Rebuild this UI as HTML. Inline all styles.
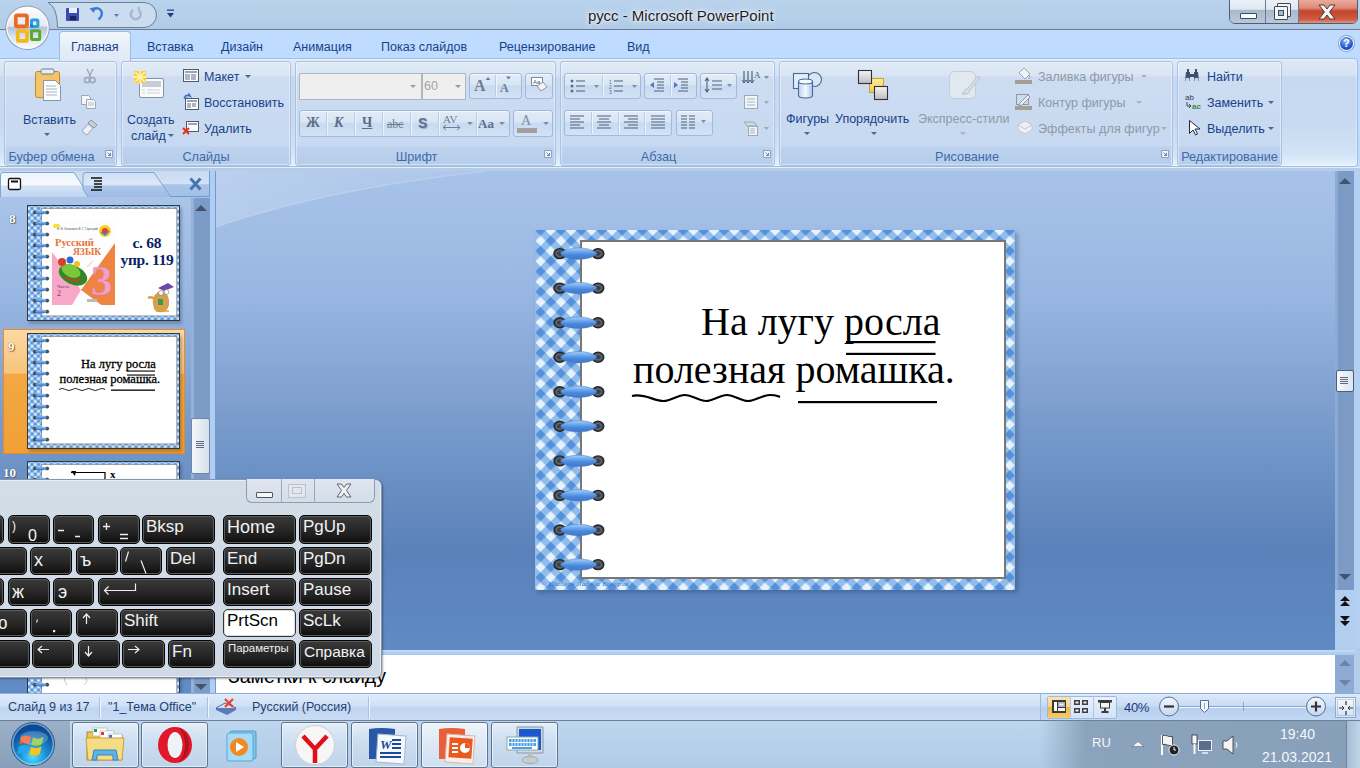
<!DOCTYPE html>
<html><head><meta charset="utf-8"><style>
html,body{margin:0;padding:0}
body{width:1360px;height:768px;overflow:hidden;position:relative;font-family:"Liberation Sans",sans-serif;font-size:12px;color:#15428b;background:#b4cde8}
.a{position:absolute}
.t{position:absolute;white-space:nowrap;line-height:1}
.grp{position:absolute;top:61px;height:103px;border:1px solid #a9c3e0;border-radius:3px;background:linear-gradient(#e1ebf7 0,#d9e5f4 14px,#cddcf1 15px,#c7d9f0 84px,#bcd2ee 85px,#b6cdeb 100%);box-shadow:inset 0 0 0 1px rgba(255,255,255,.4)}
.gl{position:absolute;left:0;right:0;top:88px;text-align:center;font-size:12.7px;color:#3e6aaa;line-height:14px}
.gll{right:18px}
</style></head><body>

<!-- ===== TITLE BAR ===== -->
<div class=a style="left:0;top:0;width:1360px;height:29px;background:linear-gradient(#bad3ec,#b1cbe7)"></div>
<div class=a style="left:0;top:29px;width:1360px;height:1px;background:#6d7d8f"></div>
<div class=t style="left:588px;top:8px;font-size:15px;color:#1e1e1e;text-shadow:0 0 6px #fff,0 0 3px #fff">русс - Microsoft PowerPoint</div>
<!-- QAT -->
<svg class=a style="left:44px;top:0" width="135" height="30">
 <path d="M4 2.5 H100 A12.5 12.5 0 0 1 100 27.5 H13.5 Q13.5 7 4 2.5Z" fill="#c9dcf0" stroke="#6f7f92" stroke-width="1"/>
 <rect x="22" y="8" width="13" height="13" fill="#3f49b6" rx="1"/>
 <rect x="25" y="8" width="8" height="5" fill="#e8eefc"/>
 <rect x="26" y="16" width="6" height="4" fill="#1d2160"/>
 <path d="M49 10 q6 -4 8.5 1.5 q1.5 4 -3 8" fill="none" stroke="#3a78d8" stroke-width="2.4"/>
 <path d="M45.5 8.5 l6 -1.5 l-1.5 6z" fill="#3a78d8"/>
 <path d="M70 14 h5 l-2.5 3z" fill="#5b7ab5"/>
 <path d="M94.5 10 A5 5 0 1 1 89 10" fill="none" stroke="#a9b7c8" stroke-width="2.4"/><path d="M93 7 l3.5 0.5 l-1.5 4z" fill="#a9b7c8"/>
 <path d="M123 13 h7 l-3.5 4.5z M123 9.5 h7 v1.3 h-7z" fill="#1f3f80"/>
</svg>
<!-- window buttons -->
<div class=a style="left:1229px;top:-3px;width:127px;height:25px;border:1px solid #4f5f73;border-radius:0 0 6px 6px;overflow:hidden">
 <div class=a style="left:0;top:0;width:35px;height:25px;background:linear-gradient(#eef3f9 0,#dfe7f1 45%,#a9bacd 50%,#b9c8d9 100%);border-right:1px solid #6a7a8d"></div>
 <div class=a style="left:36px;top:0;width:32px;height:25px;background:linear-gradient(#eef3f9 0,#dfe7f1 45%,#a9bacd 50%,#b9c8d9 100%);border-right:1px solid #6a7a8d"></div>
 <div class=a style="left:69px;top:0;width:58px;height:25px;background:linear-gradient(#eeb3a5 0,#dc8a76 40%,#c4452c 52%,#cf5a42 85%,#e09684 100%)"></div>
 <div class=a style="left:10px;top:15px;width:15px;height:4px;background:#fdfdfd;border:1px solid #3d4a5a;border-radius:1px"></div>
 <div class=a style="left:47px;top:5px;width:12px;height:12px;background:#f2f2f2;border:1px solid #3d4a5a;border-radius:1px"></div>
 <div class=a style="left:44px;top:8px;width:12px;height:12px;background:#f5f5f5;border:1px solid #3d4a5a;border-radius:1px"></div>
 <div class=a style="left:48px;top:12px;width:4px;height:4px;background:#a9bacd;border:1px solid #3d4a5a"></div>
 <svg class=a style="left:87px;top:6px" width="20" height="16"><path d="M2 1 h5 l3 4 l3 -4 h5 l-5.5 7 l5.5 7 h-5 l-3 -4 l-3 4 h-5 l5.5 -7z" fill="#f4f4f4" stroke="#4b3c3c" stroke-width="1"/></svg>
</div>
<!-- ===== TAB ROW ===== -->
<div class=a style="left:0;top:30px;width:1360px;height:28px;background:#bfdbff"></div>


<div class=t style="left:147px;top:41px;font-size:12.5px">Вставка</div>
<div class=t style="left:221px;top:41px;font-size:12.5px">Дизайн</div>
<div class=t style="left:293px;top:41px;font-size:12.5px">Анимация</div>
<div class=t style="left:381px;top:41px;font-size:12.5px">Показ слайдов</div>
<div class=t style="left:499px;top:41px;font-size:12.5px">Рецензирование</div>
<div class=t style="left:627px;top:41px;font-size:12.5px">Вид</div>

<!-- help -->
<div class=a style="left:1340px;top:37px;width:13px;height:13px;border-radius:50%;background:radial-gradient(circle at 45% 30%,#8fb8ff,#2058d0 60%,#1840a8);box-shadow:0 0 0 1px #fff,0 0 0 2px #8aa0c0"></div>
<div class=t style="left:1343px;top:38px;font-size:11px;font-weight:bold;color:#fff">?</div>

<!-- Office button -->
<svg class=a style="left:0;top:0" width="56" height="56">
 <defs>
  <linearGradient id="obg" x1="0" y1="0" x2="0" y2="1"><stop offset="0" stop-color="#fdfdfe"/><stop offset=".45" stop-color="#e3e9f1"/><stop offset=".5" stop-color="#b4c4d8"/><stop offset=".75" stop-color="#dfe6ef"/><stop offset="1" stop-color="#f7f9fb"/></linearGradient>
  <radialGradient id="obr" cx=".5" cy=".5" r=".5"><stop offset=".8" stop-color="#fff" stop-opacity="0"/><stop offset="1" stop-color="#fff" stop-opacity=".9"/></radialGradient>
 </defs>
 <circle cx="27.5" cy="27.7" r="22.2" fill="#8b9cb2"/>
 <circle cx="27.5" cy="27.7" r="21.3" fill="#fafbfd"/>
 <circle cx="27.5" cy="27.7" r="20" fill="url(#obg)"/>
 <rect x="15.8" y="15.3" width="11.2" height="11" rx="1.5" fill="none" stroke="#ea6a22" stroke-width="3.7"/>
 <rect x="31.5" y="20.1" width="6.4" height="6.5" rx="1" fill="none" stroke="#2b9ee0" stroke-width="3"/>
 <rect x="17.8" y="31" width="9.2" height="9.9" rx="1" fill="none" stroke="#f4b81a" stroke-width="3.7"/>
 <rect x="31.5" y="30.7" width="8.2" height="8.7" rx="1" fill="none" stroke="#58aa30" stroke-width="3"/>
 <rect x="25.5" y="25" width="3" height="3" fill="#f07830"/><rect x="30" y="24.5" width="3" height="3" fill="#1e7ad0"/>
 <rect x="25.5" y="29.2" width="3" height="3" fill="#f6c040"/><rect x="30.3" y="29.5" width="3" height="3" fill="#48b040"/>
</svg>
<!-- ===== RIBBON ===== -->
<div class=a style="left:0;top:58px;width:1360px;height:110px;background:#bfdbff"></div><div class=a style="left:-3px;top:58px;width:1361px;height:109px;box-sizing:border-box;border:1px solid #9fbde3;border-radius:4px;background:linear-gradient(#dfe9f6 0,#d5e2f3 17px,#c6d9f0 18px,#c7daf1 60%,#d3e3f6 88%,#e4f1fc 100%);box-shadow:inset 0 0 0 1px rgba(255,255,255,.35)"></div>
<div class=a style="left:59px;top:31px;width:70px;height:29px;border:1px solid #98bde6;border-bottom:none;border-radius:4px 4px 0 0;background:linear-gradient(#f3f7fc,#e4ecf7 60%,#dfe9f6)"></div>
<div class=t style="left:71px;top:41px;font-size:12.5px">Главная</div>
<div class="grp" style="left:4px;width:111px"><div class="gl gll">Буфер обмена</div></div>
<svg class=a style="left:105px;top:150px" width="9" height="9"><path d="M0.5 0.5h7v7h-7z" fill="#eef4fa" stroke="#8aa2c0"/><path d="M2.5 2.5l3 3M5.5 3v2.5h-2.5" fill="none" stroke="#6a86ac"/></svg>
<div class="grp" style="left:121px;width:168px"><div class="gl">Слайды</div></div>
<div class="grp" style="left:295px;width:259px"><div class="gl gll">Шрифт</div></div>
<svg class=a style="left:544px;top:150px" width="9" height="9"><path d="M0.5 0.5h7v7h-7z" fill="#eef4fa" stroke="#8aa2c0"/><path d="M2.5 2.5l3 3M5.5 3v2.5h-2.5" fill="none" stroke="#6a86ac"/></svg>
<div class="grp" style="left:560px;width:213px"><div class="gl gll">Абзац</div></div>
<svg class=a style="left:763px;top:150px" width="9" height="9"><path d="M0.5 0.5h7v7h-7z" fill="#eef4fa" stroke="#8aa2c0"/><path d="M2.5 2.5l3 3M5.5 3v2.5h-2.5" fill="none" stroke="#6a86ac"/></svg>
<div class="grp" style="left:779px;width:392px"><div class="gl gll">Рисование</div></div>
<svg class=a style="left:1161px;top:150px" width="9" height="9"><path d="M0.5 0.5h7v7h-7z" fill="#eef4fa" stroke="#8aa2c0"/><path d="M2.5 2.5l3 3M5.5 3v2.5h-2.5" fill="none" stroke="#6a86ac"/></svg>
<div class="grp" style="left:1177px;width:103px"><div class="gl">Редактирование</div></div>


<!-- ribbon contents -->
<style>
.rt{position:absolute;white-space:nowrap;line-height:1;font-size:12.5px;color:#15428b;margin-top:1px}
.gr{color:#8d99a8}
.dd{position:absolute;width:0;height:0;border-left:3px solid transparent;border-right:3px solid transparent;border-top:3px solid #4a6796}
.seg{position:absolute;border:1px solid #9fbadc;border-radius:3px;background:linear-gradient(#e3ecf7 0,#d8e5f4 45%,#c8daf1 50%,#d3e2f5 100%);box-shadow:inset 0 1px 0 #f3f7fc}
.sep{position:absolute;top:1px;bottom:1px;width:1px;background:#b8cde6;box-shadow:1px 0 0 #eef4fb}
</style>
<!-- Clipboard -->
<svg class=a style="left:33px;top:67px" width="32" height="34">
 <rect x="2.5" y="4.5" width="24" height="26" rx="2" fill="#f3c46b" stroke="#c08a2e"/>
 <rect x="8" y="2" width="13" height="5" rx="1.5" fill="#e9edf2" stroke="#6f7a86"/>
 <path d="M10.5 13.5h12l5 5v15h-17z" fill="#fbfcfd" stroke="#8a96a3"/>
 <path d="M13 19h10M13 22h11M13 25h11M13 28h11" stroke="#a9b4c0" stroke-width="1"/>
</svg>
<div class="rt" style="left:23px;top:113px">Вставить</div>
<div class="dd" style="left:44px;top:133px"></div>
<svg class=a style="left:82px;top:68px" width="16" height="16"><path d="M5 1l4 8M11 1l-4 8" stroke="#a0abb8" stroke-width="1.5"/><circle cx="5" cy="12" r="2.6" fill="none" stroke="#98a6b6" stroke-width="1.5"/><circle cx="10.5" cy="12" r="2.6" fill="none" stroke="#98a6b6" stroke-width="1.5"/></svg>
<svg class=a style="left:80px;top:94px" width="17" height="15"><path d="M1.5 1.5h7l2 2v7h-9z" fill="#f4f6f9" stroke="#9ba7b4"/><path d="M6.5 5.5h7l2 2v7h-9z" fill="#f4f6f9" stroke="#9ba7b4"/><path d="M8 9h6M8 11h6" stroke="#b5bfca"/></svg>
<svg class=a style="left:81px;top:119px" width="17" height="17"><path d="M10 1l6 5-3 3-6-5z" fill="#c7d0da" stroke="#8995a3"/><path d="M7 5l5 4-6 7-5-4z" fill="#eef1f5" stroke="#9aa6b4"/></svg>
<!-- Slides -->
<svg class=a style="left:133px;top:70px" width="34" height="30">
 <rect x="6.5" y="8.5" width="24" height="19" rx="1.5" fill="#fafbfc" stroke="#8792a0"/>
 <rect x="9" y="11" width="19" height="6" fill="#c5ccd6"/>
 <path d="M9 20h3M14 20h13M9 23h3M14 23h13" stroke="#c9d0d9"/>
 <rect x="1" y="1" width="12" height="12" fill="#f5cf3a" opacity=".95"/>
 <path d="M7 0v14M0 7h14M2 2l10 10M12 2l-10 10" stroke="#fff7b0" stroke-width="1.4"/>
</svg>
<div class="rt" style="left:127px;top:113px">Создать</div>
<div class="rt" style="left:131px;top:129px">слайд</div>
<div class="dd" style="left:168px;top:134px"></div>
<svg class=a style="left:183px;top:69px" width="17" height="15"><rect x="0.5" y="0.5" width="15" height="12" fill="#fafbfc" stroke="#4e5b6b"/><rect x="2" y="2" width="12" height="2" fill="#9aa6b6"/><rect x="2" y="5" width="5" height="6" fill="#aeb8c4"/><path d="M8 6h5M8 8h5M8 10h5" stroke="#5a6f90"/></svg>
<div class="rt" style="left:204px;top:70px">Макет</div>
<div class="dd" style="left:245px;top:75px"></div>
<svg class=a style="left:183px;top:93px" width="17" height="18"><path d="M1 5 q2 -4 6 -2 l-1.5 -2.5M1 5l4 .5" fill="none" stroke="#3a6fc8" stroke-width="1.6"/><rect x="2.5" y="5.5" width="13" height="11" fill="#fafbfc" stroke="#4e5b6b"/><rect x="4" y="7" width="10" height="2" fill="#9aa6b6"/><rect x="4" y="10" width="4" height="5" fill="#aeb8c4"/><path d="M9 11h4M9 13h4" stroke="#5a6f90"/></svg>
<div class="rt" style="left:204px;top:96px">Восстановить</div>
<svg class=a style="left:182px;top:120px" width="18" height="16"><rect x="4.5" y="1.5" width="12" height="10" fill="#fafbfc" stroke="#4e5b6b"/><rect x="6" y="3" width="9" height="2" fill="#9aa6b6"/><path d="M1 8l6 6M7 8l-6 6" stroke="#e2321c" stroke-width="2"/></svg>
<div class="rt" style="left:204px;top:122px">Удалить</div>
<!-- Font -->
<div class=a style="left:299px;top:73px;width:121px;height:25px;background:#efefef;border:1px solid #aeb6bf"></div>
<div class="dd" style="left:410px;top:85px;border-top-color:#9a9a9a"></div>
<div class=a style="left:422px;top:73px;width:42px;height:25px;background:#efefef;border:1px solid #aeb6bf"></div>
<div class="rt" style="left:424px;top:79px;color:#a5a5a5">60</div>
<div class="dd" style="left:455px;top:85px;border-top-color:#9a9a9a"></div>
<div class="seg" style="left:469px;top:73px;width:51px;height:24px"><div class="sep" style="left:25px"></div></div>
<div class="t" style="left:474px;top:77px;font:bold 16px 'Liberation Serif';color:#6b7f9a">A</div>
<div class="t" style="left:500px;top:81px;font:bold 12px 'Liberation Serif';color:#6b7f9a">A</div>
<svg class=a style="left:469px;top:73px" width="52" height="24"><path d="M16.5 7l2.5 -3 2.5 3zM37 3.5h5l-2.5 3z" fill="#6b7f9a"/></svg>
<div class="seg" style="left:525px;top:73px;width:26px;height:24px"></div>
<svg class=a style="left:529px;top:76px" width="20" height="18"><rect x="2.5" y="1.5" width="11" height="8" fill="#fff" stroke="#7a8aa0"/><text x="4" y="8" font-size="6" font-family="Liberation Sans" fill="#4a5a70">Aa</text><path d="M8 10l6 -4 4 5 -6 4z" fill="#f2f4f7" stroke="#8a96a8"/></svg>
<div class="seg" style="left:299px;top:110px;width:209px;height:25px">
 <div class="sep" style="left:26px"></div><div class="sep" style="left:54px"></div><div class="sep" style="left:82px"></div><div class="sep" style="left:110px"></div><div class="sep" style="left:138px"></div><div class="sep" style="left:176px"></div>
</div>
<div class="t" style="left:306px;top:115px;font:bold 14px 'Liberation Serif';color:#5d6f88">Ж</div>
<div class="t" style="left:334px;top:115px;font:bold italic 14px 'Liberation Serif';color:#5d6f88">К</div>
<div class="t" style="left:362px;top:115px;font:bold 14px 'Liberation Serif';color:#5d6f88;text-decoration:underline">Ч</div>
<div class="t" style="left:387px;top:117px;font:12px 'Liberation Serif';color:#6b7d96;text-decoration:line-through">abc</div>
<div class="t" style="left:418px;top:115px;font:bold 14px 'Liberation Sans';color:#5d6f88;text-shadow:1px 1px 1px #9aaac0">S</div>
<div class="t" style="left:443px;top:113px;font:11px 'Liberation Serif';color:#6b7d96">AV</div>
<svg class=a style="left:442px;top:124px" width="20" height="7"><path d="M1 3.5h17M4 1l-3 2.5 3 2.5M15 1l3 2.5-3 2.5" fill="none" stroke="#6b7d96"/></svg>
<div class="dd" style="left:467px;top:122px;border-top-color:#7d8ea6"></div>
<div class="t" style="left:478px;top:116px;font:bold 13px 'Liberation Serif';color:#5d6f88">Aa</div>
<div class="dd" style="left:499px;top:122px;border-top-color:#7d8ea6"></div>
<div class="seg" style="left:513px;top:110px;width:38px;height:25px"></div>
<div class="t" style="left:521px;top:113px;font:14px 'Liberation Serif';color:#7a8ca6">A</div>
<div class=a style="left:517px;top:128px;width:20px;height:5px;background:#a0a0a0"></div>
<div class="dd" style="left:543px;top:122px;border-top-color:#7d8ea6"></div>
<!-- Paragraph -->
<div class="seg" style="left:564px;top:73px;width:75px;height:24px"><div class="sep" style="left:37px"></div></div>
<svg class=a style="left:570px;top:78px" width="70" height="16">
 <g fill="#5d6f88"><circle cx="2" cy="3" r="1.5"/><circle cx="2" cy="8" r="1.5"/><circle cx="2" cy="13" r="1.5"/></g>
 <path d="M6 3h9M6 8h9M6 13h9" stroke="#4e617d" stroke-width="1.2"/>
 <path d="M24 7h5l-2.5 3z" fill="#7d8ea6"/>
 <text x="39" y="6" font-size="5" fill="#5d6f88" font-family="Liberation Sans">1</text><text x="39" y="11" font-size="5" fill="#5d6f88" font-family="Liberation Sans">2</text><text x="39" y="16" font-size="5" fill="#5d6f88" font-family="Liberation Sans">3</text>
 <path d="M44 3h9M44 8h9M44 13h9" stroke="#4e617d" stroke-width="1.2"/>
 <path d="M62 7h5l-2.5 3z" fill="#7d8ea6"/>
</svg>
<div class="seg" style="left:644px;top:73px;width:51px;height:24px"><div class="sep" style="left:25px"></div></div>
<svg class=a style="left:648px;top:77px" width="46" height="16">
 <path d="M6 2h10M9 5h7M9 8h7M9 11h7M6 14h10" stroke="#4e617d" stroke-width="1.2"/><path d="M6 5l-4 3 4 3z" fill="#4a78c8"/>
 <path d="M30 2h10M33 5h7M33 8h7M33 11h7M30 14h10" stroke="#4e617d" stroke-width="1.2"/><path d="M26 5l4 3-4 3z" fill="#4a78c8"/>
</svg>
<div class="seg" style="left:700px;top:73px;width:35px;height:24px"></div>
<svg class=a style="left:704px;top:76px" width="32" height="18">
 <path d="M3 2v14M1 5l2-3 2 3M1 13l2 3 2-3" fill="none" stroke="#4e617d" stroke-width="1.1"/>
 <path d="M8 5h10M8 9h10M8 13h10" stroke="#4e617d" stroke-width="1.2"/>
 <path d="M23 8h5l-2.5 3z" fill="#7d8ea6"/>
</svg>
<svg class=a style="left:742px;top:67px" width="32" height="20"><path d="M2 4v12M6 4v12M10 4v12" stroke="#4e617d" stroke-width="1.2"/><path d="M0 13l2 3 2-3M4 13l2 3 2-3M8 13l2 3 2-3" fill="none" stroke="#4e617d"/><text x="12" y="11" font-size="9" fill="#4e617d" font-family="Liberation Serif">A</text><path d="M22 9h5l-2.5 3z" fill="#7d8ea6"/></svg>
<div class="seg" style="left:564px;top:110px;width:106px;height:24px"><div class="sep" style="left:26px"></div><div class="sep" style="left:53px"></div><div class="sep" style="left:79px"></div></div>
<svg class=a style="left:570px;top:115px" width="100" height="14">
 <path d="M0 1h14M0 4h10M0 7h14M0 10h10M0 13h14" stroke="#4e617d" stroke-width="1.2"/>
 <path d="M27 1h14M29 4h10M27 7h14M29 10h10M27 13h14" stroke="#4e617d" stroke-width="1.2"/>
 <path d="M54 1h14M58 4h10M54 7h14M58 10h10M54 13h14" stroke="#4e617d" stroke-width="1.2"/>
 <path d="M81 1h14M81 4h14M81 7h14M81 10h14M81 13h14" stroke="#4e617d" stroke-width="1.2"/>
</svg>
<div class="seg" style="left:676px;top:110px;width:35px;height:24px"></div>
<svg class=a style="left:681px;top:115px" width="32" height="14"><path d="M0 1h6M0 4h6M0 7h6M0 10h6M0 13h6M8 1h6M8 4h6M8 7h6M8 10h6M8 13h6" stroke="#4e617d" stroke-width="1.2"/><path d="M20 5h5l-2.5 3z" fill="#7d8ea6"/></svg>
<svg class=a style="left:742px;top:93px" width="32" height="18"><rect x="2.5" y="2.5" width="13" height="13" fill="#f2f5f9" stroke="#9aa8b8"/><path d="M5 6h8M5 9h8M5 12h8" stroke="#a8b5c4"/><path d="M22 8h5l-2.5 3z" fill="#9aa8b8"/></svg>
<svg class=a style="left:742px;top:119px" width="32" height="18"><path d="M2 3h10l3 4H5z" fill="#cdd6e1" stroke="#9aa8b8"/><rect x="6.5" y="7.5" width="9" height="9" fill="#f2f5f9" stroke="#9aa8b8"/><path d="M8 10h5M8 12h5M8 14h5" stroke="#a8b5c4"/><path d="M22 8h5l-2.5 3z" fill="#9aa8b8"/></svg>
<!-- Drawing -->
<svg class=a style="left:790px;top:69px" width="34" height="32">
 <defs><linearGradient id="shg" x1="0" y1="0" x2="1" y2="0"><stop offset="0" stop-color="#b8d2f2"/><stop offset=".5" stop-color="#f4f8fd"/><stop offset="1" stop-color="#a9c6ec"/></linearGradient></defs>
 <circle cx="24.5" cy="10.5" r="7" fill="#d6e6f9" stroke="#4d6992" stroke-width="1.1"/>
 <rect x="3.5" y="4.5" width="15" height="15" fill="#e2edfa" stroke="#4d6992" stroke-width="1.1"/>
 <path d="M8.5 12.5v14a7 2.5 0 0 0 14 0v-14" fill="url(#shg)" stroke="#4d6992" stroke-width="1.1"/>
 <ellipse cx="15.5" cy="12.5" rx="7" ry="2.5" fill="#f7faff" stroke="#4d6992" stroke-width="1.1"/>
</svg>
<div class="rt" style="left:786px;top:112px">Фигуры</div>
<div class="dd" style="left:804px;top:132px"></div>
<svg class=a style="left:855px;top:68px" width="36" height="34">
 <defs><linearGradient id="sqg" x1="0" y1="0" x2="0" y2="1"><stop offset="0" stop-color="#f4f4f4"/><stop offset=".5" stop-color="#d9d9d9"/><stop offset="1" stop-color="#b9bcc0"/></linearGradient>
 <linearGradient id="syg" x1="0" y1="0" x2="0" y2="1"><stop offset="0" stop-color="#fdeb9c"/><stop offset="1" stop-color="#f0cc50"/></linearGradient></defs>
 <rect x="14.5" y="10.5" width="14" height="14" fill="url(#syg)" stroke="#c9a22c"/>
 <rect x="3.5" y="2.5" width="13" height="13" fill="url(#sqg)" stroke="#2e3238" stroke-width="1.1"/>
 <rect x="19.5" y="18.5" width="13" height="13" fill="url(#sqg)" stroke="#2e3238" stroke-width="1.1"/>
</svg>
<div class="rt" style="left:835px;top:112px">Упорядочить</div>
<div class="dd" style="left:871px;top:132px"></div>
<svg class=a style="left:946px;top:68px" width="36" height="34">
 <rect x="3.5" y="3.5" width="26" height="27" rx="5" fill="#e2e8ef" stroke="#c5ced8"/>
 <path d="M16 26 q2 -4 6 -6 l10 -12 l2 2 l-10 12 q-1 5 -8 4z" fill="#d8dee6" stroke="#b8c2ce"/>
</svg>
<div class="rt gr" style="left:918px;top:112px">Экспресс-стили</div>
<div class="dd" style="left:960px;top:132px;border-top-color:#a8b3c0"></div>
<svg class=a style="left:1014px;top:67px" width="20" height="18"><path d="M5 6l5-5 6 6-5 5z" fill="#f2f4f7" stroke="#9aa4b0"/><path d="M15 8q2 3 0 4" fill="none" stroke="#9aa4b0"/><rect x="1" y="13" width="17" height="4" fill="#a59e96"/></svg>
<div class="rt gr" style="left:1038px;top:70px">Заливка фигуры</div>
<div class="dd" style="left:1141px;top:75px;border-top-color:#a8b3c0"></div>
<svg class=a style="left:1014px;top:93px" width="20" height="18"><rect x="2.5" y="1.5" width="12" height="10" fill="none" stroke="#8e98a4"/><path d="M6 10l8-8 2 2-8 8-3 1z" fill="#eef1f5" stroke="#8e98a4"/><rect x="1" y="13" width="17" height="4" fill="#a59e96"/></svg>
<div class="rt gr" style="left:1038px;top:96px">Контур фигуры</div>
<div class="dd" style="left:1136px;top:101px;border-top-color:#a8b3c0"></div>
<svg class=a style="left:1016px;top:119px" width="18" height="16"><path d="M2 6l7-4 7 4v5l-7 4-7-4z" fill="#eef1f4" stroke="#c2c9d2"/><path d="M2 6l7 4 7-4" fill="none" stroke="#c2c9d2"/></svg>
<div class="rt gr" style="left:1038px;top:122px;letter-spacing:.1px">Эффекты для фигур</div>
<div class="dd" style="left:1161px;top:127px;border-top-color:#a8b3c0"></div>
<!-- Editing -->
<svg class=a style="left:1184px;top:68px" width="18" height="16"><path d="M2 4h4v9H1z M10 4h4l1 9h-5z" fill="#3d4f6b"/><rect x="6" y="6" width="4" height="3" fill="#3d4f6b"/><circle cx="3.5" cy="12" r="2.2" fill="#c8d8ee"/><circle cx="12.5" cy="12" r="2.2" fill="#c8d8ee"/><path d="M3 1h2v3H3zM11 1h2v3h-2z" fill="#3d4f6b"/></svg>
<div class="rt" style="left:1207px;top:70px">Найти</div>
<svg class=a style="left:1185px;top:93px" width="18" height="18"><text x="0" y="7" font-size="8" font-family="Liberation Sans" fill="#2c3c56">ab</text><text x="7" y="16" font-size="8" font-weight="bold" font-family="Liberation Sans" fill="#3c8a3a">ac</text><path d="M2 9v4h4M4 11l2 2-2 2" fill="none" stroke="#2c3c56" stroke-width=".9"/></svg>
<div class="rt" style="left:1207px;top:96px">Заменить</div>
<div class="dd" style="left:1268px;top:101px"></div>
<svg class=a style="left:1188px;top:119px" width="14" height="17"><path d="M1.5 1.5v13l3.5-3.5 2.5 5 2-1-2.5-5h5z" fill="#fff" stroke="#1e2a3a"/></svg>
<div class="rt" style="left:1207px;top:122px">Выделить</div>
<div class="dd" style="left:1268px;top:127px"></div>
<!-- ===== MAIN AREA ===== -->
<div class=a style="left:0;top:167px;width:1360px;height:1px;background:#e3eefb"></div>
<div class=a style="left:0;top:168px;width:1360px;height:3px;background:#b5cbe7"></div>
<div class=a style="left:216px;top:171px;width:1119px;height:477px;background:linear-gradient(#a8c3e9 0,#99b7e2 25%,#7fa0d0 48%,#6f94c7 60%,#5b81ba 80%,#5f8ac4 100%)"></div>
<svg class=a style="left:216px;top:171px" width="1119" height="477"><defs><linearGradient id="swg" x1="0" y1="0" x2="1" y2="0"><stop offset="0" stop-color="#fff" stop-opacity=".22"/><stop offset="1" stop-color="#fff" stop-opacity=".04"/></linearGradient></defs><path d="M0 0V56Q110 18 270 0Z" fill="url(#swg)"/><path d="M0 56Q110 18 270 0" fill="none" stroke="#fff" stroke-opacity=".18" stroke-width="1.5"/></svg>
<!-- right scrollbar -->
<div class=a style="left:1335px;top:171px;width:25px;height:477px;background:#b1cdf0"></div>
<div class=a style="left:1335px;top:171px;width:19px;height:419px;background:linear-gradient(90deg,#8eabd3 0,#8eabd3 3px,#7b9bc6 3px,#7b9bc6 100%)"></div>
<div class=a style="left:1354px;top:171px;width:6px;height:477px;background:#b3d0f3"></div>
<svg class=a style="left:1338px;top:177px" width="14" height="8"><path d="M1 7l6-6 6 6z" fill="#46516a"/></svg>
<svg class=a style="left:1338px;top:573px" width="14" height="8"><path d="M1 1l6 6 6-6z" fill="#46516a"/></svg>
<div class=a style="left:1336px;top:370px;width:16px;height:20px;border:1px solid #4b5f7c;border-radius:2px;background:linear-gradient(90deg,#f6f8fb,#dde4ed)"></div>
<svg class=a style="left:1339px;top:376px" width="10" height="10"><path d="M1 1.5h8M1 3.5h8M1 5.5h8M1 7.5h8" stroke="#5b6a80"/></svg>
<svg class=a style="left:1338px;top:595px" width="14" height="32"><path d="M2 6l5-5 5 5zM2 11l5-5 5 5z" fill="#111"/><path d="M2 21l5 5 5-5zM2 26l5 5 5-5z" fill="#111"/></svg>
<!-- left pane -->
<div class=a style="left:0;top:171px;width:210px;height:522px;background:linear-gradient(#aec7eb 0,#99b7e2 22.8%,#7fa0d0 43.9%,#6f94c7 54.8%,#5b81ba 73.1%,#5f8ac4 91.4%,#628cc5 100%)"></div>
<div class=a style="left:210px;top:171px;width:5px;height:522px;background:#b0cdf2"></div>
<div class=a style="left:215px;top:171px;width:1px;height:522px;background:#6f9bd3"></div>
<!-- pane tabs -->
<div class=a style="left:0;top:171px;width:210px;height:26px;background:linear-gradient(#c9dbf2 0,#d3e2f5 50%,#a9c4e8 55%,#a3c0e6 100%);border-bottom:1px solid #6e9ad0;border-right:1px solid #6e9ad0;box-sizing:border-box"></div>
<svg class=a style="left:0;top:171px" width="210" height="27">
 <path d="M0.5 26 V4 Q0.5 1.5 3 1.5 H74 L90 26" fill="url(#tabg1)" stroke="#7ea4d4"/>
 <path d="M88 26 L83 18 V4 Q83 1.5 86 1.5 H154 L171 26" fill="url(#tabg2)" stroke="#7ea4d4"/>
 <defs><linearGradient id="tabg1" x1="0" y1="0" x2="0" y2="1"><stop offset="0" stop-color="#eef4fc"/><stop offset=".5" stop-color="#f6f9fd"/><stop offset=".55" stop-color="#d3e2f5"/><stop offset="1" stop-color="#c0d5f0"/></linearGradient>
 <linearGradient id="tabg2" x1="0" y1="0" x2="0" y2="1"><stop offset="0" stop-color="#cfdff4"/><stop offset=".5" stop-color="#dce8f7"/><stop offset=".55" stop-color="#aec8ea"/><stop offset="1" stop-color="#9dbbe4"/></linearGradient></defs>
 <rect x="8.5" y="7.5" width="12" height="11" rx="1.5" fill="#fff" stroke="#111" stroke-width="1.3"/><rect x="11" y="9.5" width="7" height="2" fill="#111"/>
 <path d="M91 7h11M94 10h8M94 13h8M94 16h8M91 19h11" stroke="#111" stroke-width="1.3"/>
 <path d="M190.5 7.5l10 11M200.5 7.5l-10 11" stroke="#4775ae" stroke-width="3"/>
</svg>
<!-- pane scrollbar -->
<div class=a style="left:191px;top:198px;width:19px;height:495px;background:linear-gradient(90deg,#94b1d8 0,#94b1d8 3px,#7b9cc7 3px)"></div>
<svg class=a style="left:194px;top:203px" width="14" height="9"><path d="M1 8l6-6 6 6z" fill="#46516a"/></svg>
<div class=a style="left:191px;top:418px;width:17px;height:54px;border:1px solid #6f86a6;border-radius:2px;background:linear-gradient(90deg,#f4f7fb,#d5dfeb)"></div>
<svg class=a style="left:195px;top:440px" width="10" height="10"><path d="M1 1.5h8M1 3.5h8M1 5.5h8M1 7.5h8" stroke="#5b6a80"/></svg>
<!-- selection -->
<div class=a style="left:3px;top:329px;width:180px;height:123px;border:1px solid #e98b2c;background:linear-gradient(#fbd9a3 0,#f7c47a 35%,#f3a843 36%,#f0a035 100%)"></div>
<div class=t style="left:9px;top:211px;font:bold 13px 'Liberation Serif';color:#fff;text-shadow:0 0 1px #3a4a60,1px 1px 1px #5a6a80">8</div>
<div class=t style="left:8px;top:339px;font:bold 13px 'Liberation Serif';color:#fff;text-shadow:0 0 1px #7a4a10,1px 1px 1px #9a6a30">9</div>
<div class=t style="left:3px;top:465px;font:bold 13px 'Liberation Serif';color:#fff;text-shadow:0 0 1px #3a4a60,1px 1px 1px #5a6a80">10</div>


<!-- SLIDE -->
<svg width="0" height="0" style="position:absolute">
 <defs>
  <pattern id="ging" patternUnits="userSpaceOnUse" width="14.4250" height="14.4250" patternTransform="translate(-4.7 5.7) rotate(45)">
   <rect width="14.4250" height="14.4250" fill="#90bdeb"/>
   <rect width="7.2125" height="7.2125" fill="#5590da"/>
   <rect x="7.2125" y="7.2125" width="7.2125" height="7.2125" fill="#e6f2fc"/>
  </pattern>
  <linearGradient id="blueov" x1="0" y1="0" x2="0" y2="1">
   <stop offset="0" stop-color="#a8d0f8"/><stop offset=".35" stop-color="#6aa6ec"/><stop offset=".6" stop-color="#4a88dc"/><stop offset="1" stop-color="#3f78c8"/>
  </linearGradient>
  <g id="ring">
   <ellipse cx="24.8" cy="0" rx="5.8" ry="5" fill="#474d56" stroke="#23272d" stroke-width="1.4"/>
   <ellipse cx="63" cy="0" rx="5.8" ry="5" fill="#474d56" stroke="#23272d" stroke-width="1.4"/>
   <ellipse cx="24.8" cy="0" rx="3.4" ry="2.8" fill="#3a4049" stroke="#727b87" stroke-width=".8"/>
   <ellipse cx="63" cy="0" rx="3.4" ry="2.8" fill="#3a4049" stroke="#727b87" stroke-width=".8"/>
   <path d="M25.4 0 C31 -7.6 56 -7.6 62 0 C56 7.6 31 7.6 25.4 0z" fill="url(#blueov)" stroke="#4a78b8" stroke-width=".5"/>
  </g>
  <g id="slideg">
   <rect x="0" y="0" width="480" height="360" fill="url(#ging)"/>
   <rect x="46" y="11" width="424" height="337" fill="#fff" stroke="#777" stroke-width="2"/>
   <use href="#ring" y="23.6"/><use href="#ring" y="58.1"/><use href="#ring" y="92.7"/><use href="#ring" y="127.2"/><use href="#ring" y="161.8"/><use href="#ring" y="196.3"/><use href="#ring" y="230.9"/><use href="#ring" y="265.4"/><use href="#ring" y="300.0"/><use href="#ring" y="334.6"/>
  </g>
 </defs>
</svg>
<div class=a style="left:537px;top:233px;width:481px;height:360px;background:rgba(40,60,90,.35);filter:blur(2px)"></div>
<svg class=a style="left:535px;top:230px" width="480" height="360"><use href="#slideg"/></svg>
<div class=t style="left:541px;top:580px;font:italic 7px 'Liberation Serif';color:#3a78c8;letter-spacing:.3px">© Шаблон Ладога Валерия</div>
<div class=t style="left:701px;top:298px;font:40px 'Liberation Serif';color:#000;line-height:47px">На лугу росла</div>
<div class=t style="left:633px;top:346px;font:40px 'Liberation Serif';color:#000;line-height:47px">полезная ромашка.</div>
<svg class=a style="left:620px;top:335px" width="340" height="75">
 <rect x="226" y="6" width="89.5" height="2.2" fill="#000"/>
 <rect x="226" y="17.8" width="89.5" height="2.2" fill="#000"/>
 <path d="M12 61 C24 58 34 66 43.6 66 C51 66 57.5 60 64.8 60 S79 66 86 66 S100 60 107 60 S121 66 128 66 S142.5 60 149.5 60 S157 61 160 62" fill="none" stroke="#000" stroke-width="2.2"/>
 <rect x="178" y="66" width="139" height="2.2" fill="#000"/>
</svg>
<!-- THUMBNAILS -->
<div class=a style="left:29px;top:208px;width:153px;height:116px;background:rgba(50,70,100,.35);filter:blur(1.5px)"></div>
<svg class=a style="left:27px;top:205px" width="153" height="116" viewBox="0 0 480 364" preserveAspectRatio="none"><use href="#slideg"/><rect x="1.5" y="1.5" width="477" height="361" fill="none" stroke="#333" stroke-width="3"/></svg>
<svg class=a style="left:27px;top:205px" width="153" height="116">
 <rect x="25" y="17" width="63" height="83" fill="#fdfdfd"/>
 <path d="M25 47 L54 85 L45 100 L25 100z" fill="#f6a8c6"/>
 <path d="M88 38 L54 85 L74.5 100 L88 100z" fill="#ee8442"/>
 <path d="M60 62 l6 -6M66 70 l10 -10M70 80 l14 -14" stroke="#f59a5a" stroke-width=".6"/>
 <text x="28" y="40.5" font-family="Liberation Serif" font-size="10.5" fill="#e8743a" font-weight="bold">Русский</text>
 <text x="46" y="49.5" font-family="Liberation Serif" font-size="9.5" fill="#e8743a" font-weight="bold">ЯЗЫК</text>
 <text x="30" y="25" font-family="Liberation Sans" font-size="3" fill="#555">Н. В. Канакина  В. Г. Горецкий</text>
 <text x="64" y="90" font-family="Liberation Serif" font-size="43" fill="#f3a0c4" font-weight="bold" stroke="#e07aa8" stroke-width=".5">3</text>
 <ellipse cx="46" cy="70" rx="15" ry="9.5" fill="#2f8a26" transform="rotate(25 46 70)"/>
 <ellipse cx="44" cy="66" rx="10" ry="6" fill="#7cc83c" transform="rotate(25 44 66)"/>
 <path d="M38 72 q8 6 16 2" stroke="#c8402a" stroke-width="2" fill="none"/>
 <circle cx="35" cy="57" r="4" fill="#d6402a"/><circle cx="43" cy="55" r="3.5" fill="#2a6ad6"/><circle cx="50" cy="59" r="3" fill="#f0c020"/>
 <circle cx="78" cy="26" r="6" fill="#f5d020"/><circle cx="78" cy="26" r="3" fill="#e04040"/><path d="M74 27l4 3 4-4" stroke="#3a8ad0" stroke-width="1.5" fill="none"/>
 <rect x="26" y="19" width="7" height="4" rx="2" fill="#f0e040"/>
 <text x="30" y="83" font-family="Liberation Serif" font-size="5" fill="#7a3a6a">Часть</text>
 <text x="30" y="91" font-family="Liberation Serif" font-size="8" fill="#7a3a6a">2</text>
 <rect x="60" y="94" width="10" height="3" fill="#bbb"/>
 <text x="105.5" y="43" font-family="Liberation Serif" font-size="15.5" fill="#0a1f66" font-weight="bold" letter-spacing="-0.3">с. 68</text>
 <text x="93.5" y="59.5" font-family="Liberation Serif" font-size="15.5" fill="#0a1f66" font-weight="bold" letter-spacing="-0.3">упр. 119</text>
 <path d="M127 104 q-4 -12 4 -17 q9 -3 11 8 q1 10 -6 12 q-6 1 -9 -3z" fill="#d4a050"/>
 <path d="M121 93 q4 -2 8 2" stroke="#d4a050" stroke-width="2.5" fill="none"/>
 <path d="M131 83 l10 -5 l6 4 l-10 4z" fill="#6a4aa6"/>
 <circle cx="134" cy="88" r="2.4" fill="#fff" stroke="#664" stroke-width=".5"/><circle cx="139.5" cy="87" r="2.4" fill="#fff" stroke="#664" stroke-width=".5"/>
 <rect x="131" y="94" width="5" height="6" fill="#3a9a4a"/>
 <path d="M129 106 h8 M136 106 h6" stroke="#e0a030" stroke-width="1.5"/>
</svg>
<div class=a style="left:29px;top:336px;width:153px;height:116px;background:rgba(90,60,20,.35);filter:blur(1.5px)"></div>
<svg class=a style="left:27px;top:333px" width="153" height="116" viewBox="0 0 480 364" preserveAspectRatio="none"><use href="#slideg"/><rect x="1.5" y="1.5" width="477" height="361" fill="none" stroke="#333" stroke-width="3"/></svg>
<svg class=a style="left:27px;top:333px" width="153" height="116">
 <g stroke="#000" stroke-width=".3">
 <text x="54" y="35" font-family="Liberation Serif" font-size="12.5" fill="#000">На лугу росла</text>
 <text x="32.5" y="50" font-family="Liberation Serif" font-size="12.5" fill="#000">полезная ромашка.</text>
 </g>
 <rect x="100" y="37.5" width="28" height="1.1" fill="#000"/><rect x="100" y="41.5" width="28" height="1.1" fill="#000"/>
 <path d="M32 56.5 q3.3 -2.2 6.6 0 t6.6 0 t6.6 0 t6.6 0 t6.6 0 t6.6 0 t6.6 0" fill="none" stroke="#222" stroke-width="1"/>
 <rect x="84" y="56.5" width="44" height="1.3" fill="#000"/>
</svg>
<div class=a style="left:29px;top:464px;width:153px;height:116px;background:rgba(50,70,100,.35);filter:blur(1.5px)"></div>
<svg class=a style="left:27px;top:461px" width="153" height="116" viewBox="0 0 480 364" preserveAspectRatio="none"><use href="#slideg"/><rect x="1.5" y="1.5" width="477" height="361" fill="none" stroke="#333" stroke-width="3"/></svg>
<svg class=a style="left:27px;top:461px" width="153" height="116">
 <path d="M44 11.5 h34 v8" fill="none" stroke="#000" stroke-width="1.2"/><path d="M44 10 l4 5 l1 -5z" fill="#000"/>
 <text x="83" y="17" font-family="Liberation Serif" font-size="11" font-weight="bold" fill="#000">x</text>
</svg>
<div class=a style="left:29px;top:592px;width:153px;height:101px;background:rgba(50,70,100,.35);filter:blur(1.5px)"></div>
<svg class=a style="left:27px;top:589px" width="153" height="104" viewBox="0 0 480 326" preserveAspectRatio="none"><use href="#slideg"/><rect x="1.5" y="1.5" width="477" height="361" fill="none" stroke="#333" stroke-width="3"/></svg>
<svg class=a style="left:27px;top:589px" width="153" height="104"><path d="M40 96 q-6 -8 2 -10 q2 -6 8 -2 q6 -3 7 4 q6 3 0 8" fill="none" stroke="#c8c8c8" stroke-width="1"/></svg>
<svg class=a style="left:194px;top:683px" width="14" height="9"><path d="M1 1l6 6 6-6z" fill="#46516a"/></svg>
<!-- ===== NOTES ===== -->
<div class=a style="left:216px;top:648px;width:1119px;height:2px;background:#5f8ac4"></div>
<div class=a style="left:216px;top:650px;width:1139px;height:5px;background:linear-gradient(#c3dcf8,#a6c7f0)"></div>
<div class=a style="left:216px;top:655px;width:1119px;height:38px;background:#fff"></div>
<div class=a style="left:1335px;top:655px;width:19px;height:38px;background:#8eabd4"></div>
<svg class=a style="left:1338px;top:659px" width="14" height="30"><path d="M1 7l6-6 6 6z M1 21l6 6 6-6z" fill="#6d84a8"/></svg>
<div class=t style="left:228px;top:667px;font-size:19.5px;color:#000">Заметки к слайду</div>
<!-- ===== STATUS BAR ===== -->
<div class=a style="left:0;top:693px;width:1360px;height:1px;background:#8eaedb"></div>
<div class=a style="left:0;top:694px;width:1360px;height:26px;background:linear-gradient(#dfebfa 0,#cfe0f6 45%,#c0d5f0 55%,#c8dcf4 100%)"></div>
<div class=a style="left:99px;top:697px;width:1px;height:21px;background:#a8c1e2;box-shadow:1px 0 0 #eef5fd"></div>
<div class=a style="left:207px;top:697px;width:1px;height:21px;background:#a8c1e2;box-shadow:1px 0 0 #eef5fd"></div>
<div class=a style="left:368px;top:697px;width:1px;height:21px;background:#a8c1e2;box-shadow:1px 0 0 #eef5fd"></div>
<div class=t style="left:8px;top:701px;font-size:12.5px;color:#1f3f76">Слайд 9 из 17</div>
<div class=t style="left:108px;top:701px;font-size:12.5px;color:#1f3f76">"1_Тема Office"</div>
<svg class=a style="left:214px;top:696px" width="24" height="20"><path d="M2 12l9-5 11 5-9 5z" fill="#d8e2ee" stroke="#4a6aa0"/><path d="M2 12v2l11 5 9-5v-2" fill="#5a7ab8"/><path d="M11 3l8 8M19 3l-8 8" stroke="#e8402a" stroke-width="2.2"/></svg>
<div class=t style="left:252px;top:701px;font-size:12.5px;color:#1f3f76">Русский (Россия)</div>
<div class=a style="left:1040px;top:694px;width:320px;height:26px;background:linear-gradient(#dceafa 0,#c9dcf4 45%,#b7cfee 55%,#c3d8f3 100%)"></div>
<div class=a style="left:1040px;top:694px;width:1px;height:26px;background:#9fb9de"></div>
<div class=a style="left:1047px;top:696px;width:68px;height:21px;border:1px solid #9fb9de;border-radius:2px;background:linear-gradient(#e9f1fb,#d2e2f6)"></div>
<div class=a style="left:1048px;top:697px;width:22px;height:21px;background:linear-gradient(#fde3b0 0,#fad28c 45%,#efb73a 50%,#f5cf6e 100%)"></div>
<svg class=a style="left:1040px;top:694px" width="80" height="26">
 <rect x="12" y="6" width="14" height="13" fill="#3a3a3a"/>
 <rect x="14" y="8" width="3" height="9" fill="#fff"/>
 <rect x="18" y="8" width="7" height="5" fill="#a8aeb6"/><rect x="19.5" y="9.5" width="4" height="2" fill="#f4f4f4"/>
 <rect x="18" y="14" width="7" height="3" fill="#f4f4f4"/>
 <path d="M30.5 2v22M53.5 2v22" stroke="#b0c6e4"/>
 <g fill="#3f3f3f"><rect x="34" y="6" width="6" height="5"/><rect x="42" y="6" width="6" height="5"/><rect x="34" y="14" width="6" height="5"/><rect x="42" y="14" width="6" height="5"/></g>
 <g fill="#f2f2f2"><rect x="35.5" y="7.5" width="3" height="2"/><rect x="43.5" y="7.5" width="3" height="2"/><rect x="35.5" y="15.5" width="3" height="2"/><rect x="43.5" y="15.5" width="3" height="2"/></g>
 <rect x="58" y="6" width="14" height="2.5" fill="#3a3a3a"/>
 <rect x="60.5" y="8.5" width="9" height="5.5" fill="#f4f4f4" stroke="#3a3a3a"/>
 <rect x="64" y="14" width="2" height="3.5" fill="#3a3a3a"/><rect x="61.5" y="17" width="7" height="2" fill="#3a3a3a"/>
</svg>
<div class=t style="left:1124px;top:701px;font-size:13px;color:#1b3a80;letter-spacing:-0.3px">40%</div>
<svg class=a style="left:1157px;top:695px" width="170" height="24">
 <path d="M20 11.5h139" stroke="#8aa6cc"/><path d="M20 12.5h139" stroke="#f2f7fd"/>
 <path d="M86.5 7v9" stroke="#8aa6cc"/>
 <circle cx="12" cy="11.5" r="9.5" fill="url(#zbt)" stroke="#4f6f9f"/><path d="M7 11.5h10" stroke="#333" stroke-width="2.2"/>
 <circle cx="159" cy="11.5" r="9.5" fill="url(#zbt)" stroke="#4f6f9f"/><path d="M154 11.5h10M159 6.5v10" stroke="#333" stroke-width="2.2"/>
 <path d="M43.5 5.5h8v8l-4 4-4-4z" fill="#f5f8fc" stroke="#4f6f9f"/><path d="M47.5 8v6" stroke="#8aa0c0"/>
 <defs><linearGradient id="zbt" x1="0" y1="0" x2="0" y2="1"><stop offset="0" stop-color="#f4f8fd"/><stop offset="1" stop-color="#c4d6ee"/></linearGradient></defs>
</svg>
<div class=a style="left:1335px;top:697px;width:19px;height:19px;border:1px solid #8ca9d2;background:linear-gradient(#f4f8fd,#d5e3f5)"></div>
<svg class=a style="left:1336px;top:698px" width="20" height="20"><path d="M3 10h5M12 10h5M10 3v4M10 13v4" stroke="#333" stroke-width="1.2"/><path d="M6 8l2 2-2 2M14 8l-2 2 2 2" fill="none" stroke="#333"/><path d="M1.5 1.5h16v16h-16z" fill="none" stroke="#9aa" stroke-dasharray="1 1"/></svg>

<!-- ===== TASKBAR ===== -->
<div class=a style="left:0;top:720px;width:1360px;height:48px;background:linear-gradient(#bed6ee,#b1cbe7)"></div>
<div class=a style="left:0;top:720px;width:1360px;height:1px;background:#6c8099"></div>
<div class=a style="left:0;top:721px;width:70px;height:47px;background:linear-gradient(#9cb1c8,#879fb9)"></div>
<div class=a style="left:1040px;top:721px;width:306px;height:47px;background:linear-gradient(90deg,rgba(135,159,185,0) 0,#8ca3bd 45px,#889fb9 100%)"></div>
<div class=a style="left:1346px;top:721px;width:14px;height:47px;background:linear-gradient(90deg,#a6bdd6,#c3d5e9);border-left:1px solid #6f8298"></div>
<!-- start orb -->
<div class=a style="left:12px;top:723px;width:42px;height:42px;border-radius:50%;background:radial-gradient(circle at 50% 80%,#50e0ff 0,#1a8ad0 35%,#0c4d9a 68%,#0a3a7a 100%);box-shadow:0 0 0 1px #2a5680,inset 0 0 0 1.5px rgba(190,225,250,.55)"></div>
<svg class=a style="left:17px;top:730px" width="34" height="30">
 <path d="M4 7 q5 -3 10 0 l-1.8 7.5 q-5 -3 -10 0z" fill="#f25a22"/>
 <path d="M16 7.3 q5 3 10.5 -0.5 l-1.8 7.8 q-5 3 -10.5 0z" fill="#8cc63e"/>
 <path d="M2 16.5 q5 -3 10 0 l-1.8 7.5 q-5 -3 -10 0z" fill="#27a6ea"/>
 <path d="M14 16.8 q5 3 10.5 -0.5 l-1.8 7.8 q-5 3 -10.5 0z" fill="#fcc31a"/>
 <ellipse cx="17" cy="8" rx="14" ry="7" fill="rgba(255,255,255,.22)"/>
</svg>
<style>.tbb{position:absolute;top:722px;width:65px;height:44px;border:1px solid #5f738c;border-radius:3px;background:linear-gradient(#e2edf8 0,#cadcef 50%,#bfd4eb 100%);box-shadow:inset 0 0 0 1px rgba(255,255,255,.55)}</style>
<div class=tbb style="left:72px"></div>
<div class=tbb style="left:141px"></div>
<div class=tbb style="left:281px"></div>
<div class=tbb style="left:351px"></div>
<div class=tbb style="left:421px;background:linear-gradient(#eef5fb 0,#dbe8f5 50%,#cfe0f1 100%)"></div>
<div class=tbb style="left:491px"></div>
<!-- explorer -->
<svg class=a style="left:84px;top:724px" width="44" height="42">
 <path d="M3 8h10l3 3h22v25H3z" fill="#e9c45a" stroke="#b08a2a"/>
 <rect x="9" y="4" width="14" height="8" fill="#fff" stroke="#aaa" stroke-width=".6"/><rect x="10" y="5" width="3" height="3" fill="#2a9a3a"/>
 <rect x="16" y="7" width="14" height="8" fill="#fff" stroke="#aaa" stroke-width=".6"/><rect x="17" y="8" width="3" height="3" fill="#e23a2a"/>
 <rect x="24" y="10" width="14" height="8" fill="#fff" stroke="#aaa" stroke-width=".6"/><rect x="25" y="11" width="3" height="3" fill="#2a7ae2"/>
 <path d="M2 14h38l-2 22H4z" fill="#f6dc85" stroke="#c9a13a"/>
 <path d="M10 26h22l2 10h-5v-5h-16v5h-5z" fill="#5fb4e4" stroke="#2f86c0"/>
</svg>
<!-- opera -->
<svg class=a style="left:155px;top:725px" width="40" height="40"><ellipse cx="20" cy="20" rx="17" ry="18" fill="#e0182a"/><ellipse cx="20" cy="20" rx="7.5" ry="13" fill="#eef3f9"/><path d="M24 3 q10 5 10 17 q0 12 -10 17 q6 -6 6 -17 q0 -11 -6 -17z" fill="#b01020"/></svg>
<!-- media player -->
<svg class=a style="left:224px;top:728px" width="36" height="36"><rect x="6" y="3" width="26" height="28" rx="2" fill="#7ec4ec" stroke="#4d9ccc"/><rect x="3" y="5" width="26" height="28" rx="2" fill="#a6daf6" stroke="#5aa8d8"/><circle cx="15" cy="19" r="9" fill="#f08a20"/><path d="M12 14v10l8-5z" fill="#fff"/></svg>
<!-- yandex -->
<svg class=a style="left:294px;top:724px" width="42" height="42"><circle cx="21" cy="21" r="19.5" fill="#f6f6f6" stroke="#d0d0d0"/><path d="M9 12l12 13M33 12l-12 13M21 24v15" stroke="#e0101a" stroke-width="4.5"/></svg>
<!-- word -->
<svg class=a style="left:363px;top:724px" width="44" height="42"><path d="M6 5h26v30H6z" fill="#4a78c8"/><path d="M6 5q12 -2 26 0v6H14v24H6z" fill="#2a58a8"/><rect x="14" y="11" width="28" height="28" fill="#f5f8fc" stroke="#a8b8cc" transform="rotate(4 28 25)"/><text x="17" y="25" font-family="Liberation Serif" font-size="13" font-weight="bold" font-style="italic" fill="#1a4aa0">W</text><path d="M29 16h9M29 20h9M29 24h9M17 29h21M17 33h21" stroke="#1a4aa0" stroke-width="2"/></svg>
<!-- powerpoint -->
<svg class=a style="left:433px;top:724px" width="44" height="42"><path d="M6 5h26v30H6z" fill="#f09070"/><path d="M6 5q12 -2 26 0v6H14v24H6z" fill="#e8603a"/><rect x="13" y="11" width="28" height="28" fill="#fbeee8" stroke="#d8b8a8" transform="rotate(4 27 25)"/><rect x="16" y="14" width="23" height="20" fill="#e85a20" transform="rotate(4 27 25)"/><path d="M19 20h6M19 24h6M19 28h6" stroke="#fff" stroke-width="1.8"/><circle cx="32" cy="24" r="5" fill="#fff"/><path d="M32 24v-5a5 5 0 0 1 5 5z" fill="#e85a20"/></svg>
<!-- osk -->
<svg class=a style="left:504px;top:724px" width="44" height="42"><path d="M13 3h26v26H13z" fill="#d0d8e0" stroke="#8898a8"/><rect x="15" y="5" width="22" height="21" fill="#1a58d0"/><ellipse cx="26" cy="36" rx="8" ry="3.5" fill="#c8ccd2" stroke="#9aa"/><path d="M24 29h4v5h-4z" fill="#bbb"/><rect x="3" y="13" width="31" height="13" fill="#fff" stroke="#8aa"/><g fill="#4aa0e8"><rect x="5" y="15" width="27" height="3"/><rect x="5" y="19" width="27" height="3"/><rect x="8" y="23" width="20" height="2"/></g><path d="M8 15v7M11 15v7M14 15v7M17 15v7M20 15v7M23 15v7M26 15v7M29 15v7" stroke="#fff" stroke-width=".8"/></svg>
<!-- tray -->
<div class=t style="left:1092px;top:736px;font-size:13px;color:#f2f6fa">RU</div>
<svg class=a style="left:1131px;top:739px" width="14" height="9"><path d="M1 7.5l6-5 6 5z" fill="#f4f7fa" stroke="#5a6a7a" stroke-width=".6"/></svg>
<svg class=a style="left:1160px;top:734px" width="24" height="22"><path d="M2 1v20" stroke="#fff" stroke-width="2"/><path d="M2.5 1.5c4 -1 6 2 10 1v9c-4 1 -6 -2 -10 -1z" fill="#f4f4f4" stroke="#333" stroke-width=".8"/><circle cx="14" cy="16" r="5" fill="#222" stroke="#eee"/><path d="M14 13v3h2" stroke="#fff" fill="none"/></svg>
<svg class=a style="left:1191px;top:734px" width="22" height="22"><rect x="1" y="1" width="5" height="9" fill="#f6f6f6" stroke="#333" stroke-width=".8"/><path d="M3.5 10v10" stroke="#f6f6f6" stroke-width="2"/><rect x="7.5" y="6.5" width="13" height="10" fill="#5a7088" stroke="#eef" /><path d="M11 19h6" stroke="#eef" stroke-width="1.5"/></svg>
<svg class=a style="left:1221px;top:734px" width="20" height="22"><path d="M2 7h4l6-5v18l-6-5H2z" fill="#f4f4f4" stroke="#333" stroke-width=".8"/><path d="M15 8q2 3 0 6" fill="none" stroke="#eee"/></svg>
<div class=t style="left:1280px;top:727px;font-size:14px;color:#f4f8fb">19:40</div>
<div class=t style="left:1262px;top:750px;font-size:14px;color:#f4f8fb">21.03.2021</div>

<!-- ===== ON-SCREEN KEYBOARD ===== -->
<div class=a style="left:-6px;top:479px;width:386px;height:197px;border:1px solid #8395ab;border-radius:0 7px 6px 0;background:linear-gradient(#d3dde8,#cfdae6);box-shadow:1px 1px 2px rgba(0,0,0,.35),inset 0 0 0 1px rgba(255,255,255,.5)"></div>
<div class=a style="left:246px;top:479px;width:127px;height:23px;border:1px solid #8c9bb0;border-top:none;border-radius:0 0 6px 6px;background:linear-gradient(#dfe6ee,#d4dde8)"></div>
<div class=a style="left:281px;top:479px;width:1px;height:23px;background:#9aa8bb"></div>
<div class=a style="left:314px;top:479px;width:1px;height:23px;background:#9aa8bb"></div>
<div class=a style="left:256px;top:492px;width:15px;height:4px;background:#f8f8f8;border:1px solid #4a5564;border-radius:1px"></div>
<div class=a style="left:288px;top:484px;width:16px;height:12px;border:1px solid #b9c3cf;background:#e3e8ee"></div>
<div class=a style="left:292px;top:487px;width:8px;height:5px;border:1px solid #b9c3cf"></div>
<svg class=a style="left:336px;top:483px" width="16" height="15"><path d="M1 1h4.5l2.5 3.5 2.5-3.5h4.5l-4.5 6.5 4.5 6.5h-4.5l-2.5-3.5-2.5 3.5h-4.5l4.5-6.5z" fill="#f1f1f1" stroke="#4b5560" stroke-width=".9"/></svg>
<style>
.k{position:absolute;border:1px solid #050505;border-radius:5px;box-sizing:border-box;background:linear-gradient(#3a3a3a 0,#2c2c2c 40%,#1c1c1c 75%,#0c0c0c 100%);box-shadow:inset 0 0 0 1px #5a5a5a;color:#f2f2f2;font-size:17px;line-height:1;white-space:nowrap;overflow:hidden}
.k span{position:absolute}
</style>
<div class="k" style="left:-40px;top:515px;width:44px;height:29px"></div>
<div class="k" style="left:8px;top:515px;width:42px;height:29px"><span style="left:3px;top:4px;font-size:12px">)</span><span style="left:19px;top:12px;font-size:16px">0</span></div>
<div class="k" style="left:53px;top:515px;width:41px;height:29px"><svg class=a style="left:0;top:0" width="42" height="29"><path d="M4 14.5h6M21 20.5h5" stroke="#eee" stroke-width="1.3"/></svg></div>
<div class="k" style="left:98px;top:515px;width:42px;height:29px"><svg class=a style="left:0;top:0" width="42" height="29"><path d="M4 10.5h7M7.5 7v7" stroke="#eee" stroke-width="1.3"/><path d="M21 18.5h8M21 22.5h8" stroke="#eee" stroke-width="1.3"/></svg></div>
<div class="k" style="left:142px;top:515px;width:73px;height:29px"><span style="left:3px;top:2px">Bksp</span></div>
<div class="k" style="left:223px;top:515px;width:73px;height:29px"><span style="left:3px;top:2px;font-size:18px">Home</span></div>
<div class="k" style="left:299px;top:515px;width:73px;height:29px"><span style="left:3px;top:2px">PgUp</span></div>
<div class="k" style="left:-20px;top:547px;width:47px;height:28px"></div>
<div class="k" style="left:30px;top:547px;width:42px;height:28px"><span style="left:3px;top:3px;font-size:18px">х</span></div>
<div class="k" style="left:76px;top:547px;width:42px;height:28px"><span style="left:3px;top:3px;font-size:18px">ъ</span></div>
<div class="k" style="left:120px;top:547px;width:42px;height:28px"><svg class=a style="left:0;top:0" width="42" height="28"><path d="M4.5 13.5l3-10M20 12.5l5 13" stroke="#eee" stroke-width="1.2"/></svg></div>
<div class="k" style="left:166px;top:547px;width:49px;height:28px"><span style="left:3px;top:2px">Del</span></div>
<div class="k" style="left:223px;top:547px;width:73px;height:28px"><span style="left:3px;top:2px">End</span></div>
<div class="k" style="left:299px;top:547px;width:73px;height:28px"><span style="left:3px;top:2px">PgDn</span></div>
<div class="k" style="left:-40px;top:578px;width:44px;height:28px"></div>
<div class="k" style="left:8px;top:578px;width:42px;height:28px"><span style="left:3px;top:4px;font-size:18px">ж</span></div>
<div class="k" style="left:53px;top:578px;width:41px;height:28px"><span style="left:4px;top:4px;font-size:18px">э</span></div>
<div class="k" style="left:98px;top:578px;width:117px;height:28px"><svg class=a style="left:0;top:0" width="117" height="28"><path d="M5 11.5h31.5v-7" fill="none" stroke="#eee" stroke-width="1.2"/><path d="M9.5 7.5l-4 4 4 4" fill="none" stroke="#eee" stroke-width="1.2"/></svg></div>
<div class="k" style="left:223px;top:578px;width:73px;height:28px"><span style="left:3px;top:2px">Insert</span></div>
<div class="k" style="left:299px;top:578px;width:73px;height:28px"><span style="left:3px;top:2px">Pause</span></div>
<div class="k" style="left:-20px;top:609px;width:47px;height:28px"><span style="left:13px;top:4px;font-size:18px">ю</span></div>
<div class="k" style="left:30px;top:609px;width:42px;height:28px"><svg class=a style="left:0;top:0" width="42" height="28"><path d="M5.5 12.5l1-3" stroke="#ddd" stroke-width="1.2"/><rect x="22" y="20" width="2.2" height="2.2" fill="#f2f2f2"/></svg></div>
<div class="k" style="left:76px;top:609px;width:42px;height:28px"><svg class=a style="left:0;top:0" width="42" height="28"><path d="M9.5 4v10M6 8l3.5-4 3.5 4" fill="none" stroke="#eee" stroke-width="1.2"/></svg></div>
<div class="k" style="left:120px;top:609px;width:95px;height:28px"><span style="left:3px;top:2px">Shift</span></div>
<div class="k" style="left:223px;top:609px;width:73px;height:28px;background:#fff;box-shadow:inset 0 0 0 1px #ddd;border-color:#333;color:#000"><span style="left:3px;top:2px">PrtScn</span></div>
<div class="k" style="left:299px;top:609px;width:73px;height:28px"><span style="left:3px;top:2px">ScLk</span></div>
<div class="k" style="left:-20px;top:640px;width:50px;height:28px"></div>
<div class="k" style="left:32px;top:640px;width:42px;height:28px"><svg class=a style="left:0;top:0" width="42" height="28"><path d="M5 8.5h11M9 5l-4 3.5 4 3.5" fill="none" stroke="#eee" stroke-width="1.2"/></svg></div>
<div class="k" style="left:78px;top:640px;width:42px;height:28px"><svg class=a style="left:0;top:0" width="42" height="28"><path d="M9.5 5v10M6 11l3.5 4 3.5-4" fill="none" stroke="#eee" stroke-width="1.2"/></svg></div>
<div class="k" style="left:122px;top:640px;width:43px;height:28px"><svg class=a style="left:0;top:0" width="42" height="28"><path d="M5 8.5h11M12 5l4 3.5-4 3.5" fill="none" stroke="#eee" stroke-width="1.2"/></svg></div>
<div class="k" style="left:168px;top:640px;width:47px;height:28px"><span style="left:3px;top:2px">Fn</span></div>
<div class="k" style="left:223px;top:640px;width:73px;height:28px"><span style="left:4px;top:2px;font-size:11.4px">Параметры</span></div>
<div class="k" style="left:299px;top:640px;width:73px;height:28px"><span style="left:4px;top:3px;font-size:15.5px">Справка</span></div>
</body></html>
